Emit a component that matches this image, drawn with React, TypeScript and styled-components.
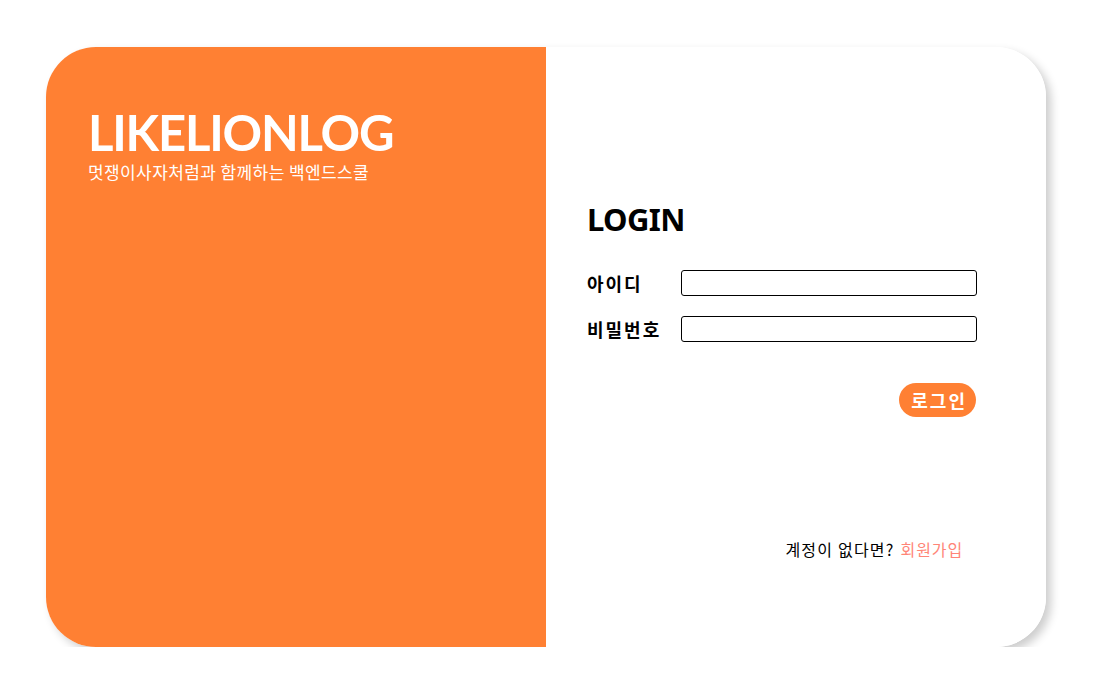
import React from 'react';
import styled, { createGlobalStyle } from 'styled-components';

const GlobalStyle = createGlobalStyle`
  html, body {
    margin: 0;
    padding: 0;
    background: #fff;
    font-family: 'Noto Sans', 'Noto Sans CJK KR', sans-serif;
  }
`;

const ORANGE = '#ff8033';

const Page = styled.div`
  padding: 47px 0 0 46px;
`;

const Card = styled.div`
  display: flex;
  width: 1000px;
  height: 600px;
  border-radius: 50px;
  overflow: hidden;
  box-shadow: 5px 5px 10px rgba(0, 0, 0, 0.2);
`;

const Brand = styled.section`
  width: 500px;
  background: ${ORANGE};
  color: #fff;
  padding: 55px 42px;
  box-sizing: border-box;
`;

const Logo = styled.h1`
  margin: 0;
  font-family: Lato, 'Noto Sans', sans-serif;
  font-size: 49px;
  font-weight: 700;
  line-height: 60px;
  letter-spacing: -1.2px;
`;

const Slogan = styled.p`
  margin: 0;
  font-size: 17px;
  line-height: 20px;
  letter-spacing: 0.4px;
  font-family: 'Noto Sans CJK KR', sans-serif;
`;

const Panel = styled.section`
  width: 500px;
  background: #fff;
  padding: 150px 69px 0 41px;
  box-sizing: border-box;
  display: flex;
  flex-direction: column;
`;

const Heading = styled.h2`
  margin: 0 0 29px;
  font-size: 31px;
  font-weight: 700;
  line-height: 44px;
  letter-spacing: -0.6px;
  color: #000;
`;

const Field = styled.label`
  display: flex;
  align-items: center;
  margin-bottom: 20px;
`;

const FieldName = styled.span`
  width: 94px;
  font-family: 'Noto Sans CJK KR', sans-serif;
  font-size: 18px;
  font-weight: 700;
  letter-spacing: 2px;
  color: #000;
`;

const Input = styled.input`
  width: 296px;
  height: 26px;
  box-sizing: border-box;
  border: 1px solid #000;
  border-radius: 3px;
  outline: none;
`;

const Actions = styled.div`
  display: flex;
  justify-content: flex-end;
  margin-top: 21px;
  padding-right: 1px;
`;

const Submit = styled.button`
  height: 34px;
  padding: 0 9px 0 12px;
  border: none;
  border-radius: 17px;
  background: ${ORANGE};
  color: #fff;
  font-family: 'Noto Sans CJK KR', sans-serif;
  font-size: 18px;
  font-weight: 700;
  letter-spacing: 2px;
  cursor: pointer;
`;

const Footer = styled.p`
  margin: 120px 14px 0 0;
  text-align: right;
  font-family: 'Noto Sans CJK KR', sans-serif;
  font-size: 16px;
  letter-spacing: 1.2px;
  color: #000;
`;

const SignUp = styled.a`
  margin-left: 6px;
  letter-spacing: 0.9px;
  color: #ff8577;
  text-decoration: none;
`;

export default function App() {
  return (
    <Page>
      <GlobalStyle />
      <Card>
        <Brand>
          <Logo>LIKELIONLOG</Logo>
          <Slogan>멋쟁이사자처럼과 함께하는 백엔드스쿨</Slogan>
        </Brand>
        <Panel>
          <Heading>LOGIN</Heading>
          <Field>
            <FieldName>아이디</FieldName>
            <Input type="text" />
          </Field>
          <Field>
            <FieldName>비밀번호</FieldName>
            <Input type="password" />
          </Field>
          <Actions>
            <Submit>로그인</Submit>
          </Actions>
          <Footer>
            계정이 없다면?
            <SignUp href="#">회원가입</SignUp>
          </Footer>
        </Panel>
      </Card>
    </Page>
  );
}
